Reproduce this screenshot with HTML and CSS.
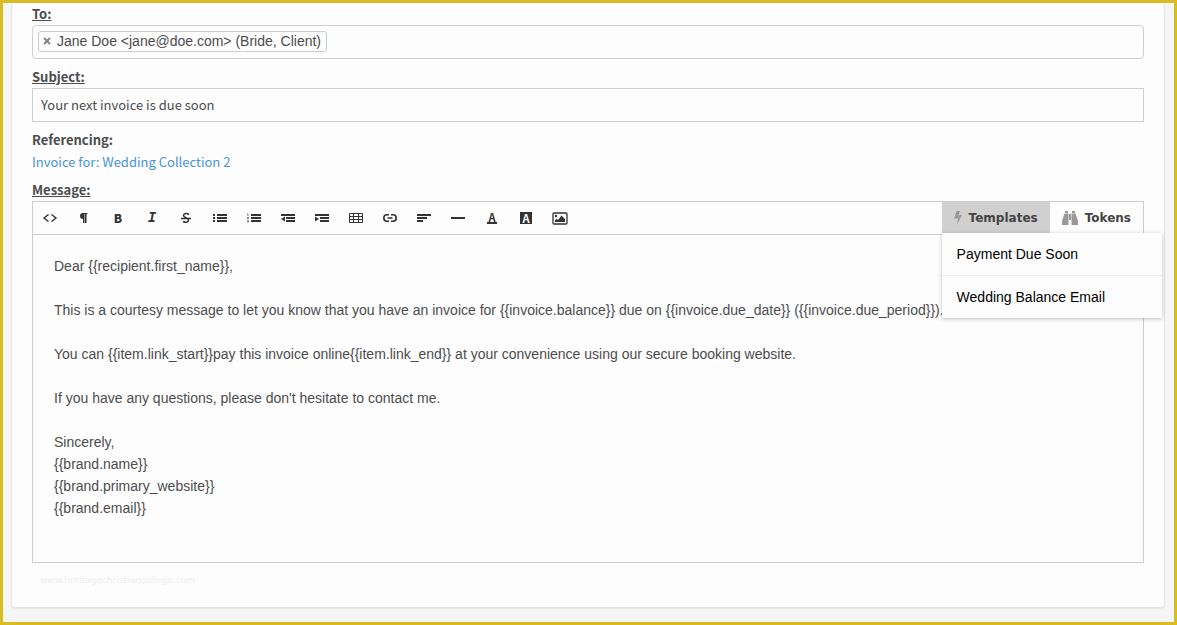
FILE: index.html
```html
<!DOCTYPE html>
<html lang="en">
<head>
  <meta charset="UTF-8">
  <meta name="viewport" content="width=device-width, initial-scale=1.0">
  <title>Compose message</title>
  <link rel="stylesheet" href="styles.css">
</head>
<body>
  <form class="card">
    <div class="field">
      <label class="label" for="to">To:</label>
      <div class="recipients">
        <span class="chip">
          <button type="button" class="chip-remove" aria-label="Remove Jane Doe">
            <svg width="8" height="8" viewBox="0 0 8 8"><path d="M1 1l6 6M7 1l-6 6" stroke="currentColor" stroke-width="2"/></svg>
          </button>
          Jane Doe &lt;jane@doe.com&gt; (Bride, Client)
        </span>
        <input type="text" id="to" class="recipients-input">
      </div>
    </div>

    <div class="field">
      <label class="label" for="subject">Subject:</label>
      <input type="text" id="subject" class="input" value="Your next invoice is due soon">
    </div>

    <div class="field field-reference">
      <strong class="label label-plain">Referencing:</strong>
      <a href="#" class="reference">Invoice for: Wedding Collection 2</a>
    </div>

    <label class="label" for="message">Message:</label>
    <div class="editor">
      <div class="toolbar">
        <button type="button" class="tool" aria-label="HTML">
          <svg width="16" height="16" viewBox="0 0 16 16"><path d="M6.500 4.500L2 8l4.500 3.500M9.500 4.500L14 8l-4.500 3.500" fill="none" stroke="currentColor" stroke-width="1.400"/></svg>
        </button>
        <button type="button" class="tool" aria-label="Formatting">
          <svg width="16" height="16" viewBox="0 0 16 16"><path d="M11.500 3v1h-1v9H9V4H8.500v9H7V9a3 3 0 0 1 0-6z" fill="currentColor"/></svg>
        </button>
        <button type="button" class="tool tool-text" aria-label="Bold"><b>B</b></button>
        <button type="button" class="tool tool-text tool-italic" aria-label="Italic"><i>I</i></button>
        <button type="button" class="tool" aria-label="Strikethrough">
          <svg width="16" height="16" viewBox="0 0 16 16"><path d="M11 4.500C8.500 3 5.500 3.500 5.500 5.500c0 2.500 5 2 5 4.500 0 2.500-3 2.800-5.500 1.500M3 8.500h10" fill="none" stroke="currentColor" stroke-width="1.500"/></svg>
        </button>
        <button type="button" class="tool" aria-label="Bulleted list">
          <svg width="16" height="16" viewBox="0 0 16 16" fill="currentColor"><path d="M1 4h2v2H1zM1 7h2v2H1zM1 10h2v2H1zM5 4h10v2H5zM5 7h10v2H5zM5 10h10v2H5z"/></svg>
        </button>
        <button type="button" class="tool" aria-label="Numbered list">
          <svg width="16" height="16" viewBox="0 0 16 16" fill="currentColor"><path d="M5 4h10v2H5zM5 7h10v2H5zM5 10h10v2H5z"/><path d="M1 4h1v2M1 7.500h1.500v1H1M1 10.500h1.500v1.500H1" fill="none" stroke="currentColor" stroke-width=".6"/></svg>
        </button>
        <button type="button" class="tool" aria-label="Outdent">
          <svg width="16" height="16" viewBox="0 0 16 16" fill="currentColor"><path d="M1 4h14v2H1zM6 7h9v2H6zM6 10h9v2H6zM1 9l4-2.500v5z"/></svg>
        </button>
        <button type="button" class="tool" aria-label="Indent">
          <svg width="16" height="16" viewBox="0 0 16 16" fill="currentColor"><path d="M1 4h14v2H1zM6 7h9v2H6zM6 10h9v2H6zM5 9L1 6.500v5z"/></svg>
        </button>
        <button type="button" class="tool" aria-label="Table">
          <svg width="16" height="16" viewBox="0 0 16 16"><path d="M1.500 3.500h13v9h-13zM1.500 6.500h13M1.500 9.500h13M5.500 3.500v9M10.500 3.500v9" fill="none" stroke="currentColor"/></svg>
        </button>
        <button type="button" class="tool" aria-label="Link">
          <svg width="16" height="16" viewBox="0 0 16 16"><path d="M7 4.800H5a3.200 3.200 0 0 0 0 6.400h2M9 4.800h2a3.200 3.200 0 0 1 0 6.400H9M5.500 8h5" fill="none" stroke="currentColor" stroke-width="1.600"/></svg>
        </button>
        <button type="button" class="tool" aria-label="Alignment">
          <svg width="16" height="16" viewBox="0 0 16 16" fill="currentColor"><path d="M1 4h14v2H1zM1 7h10v2H1zM1 10h6v2H1z"/></svg>
        </button>
        <button type="button" class="tool" aria-label="Horizontal rule">
          <svg width="16" height="16" viewBox="0 0 16 16" fill="currentColor"><path d="M1 7h14v2H1z"/></svg>
        </button>
        <button type="button" class="tool tool-text tool-color" aria-label="Text color"><span>A</span></button>
        <button type="button" class="tool tool-text tool-back" aria-label="Background color"><span>A</span></button>
        <button type="button" class="tool" aria-label="Image">
          <svg width="16" height="16" viewBox="0 0 16 16"><rect x="1" y="3" width="14" height="11" rx="1" fill="none" stroke="currentColor" stroke-width="1.300"/><circle cx="4" cy="6" r="1.200" fill="currentColor"/><path d="M3 12v-2l2-1 1 1 3.500-4.500L13 9v3z" fill="currentColor"/></svg>
        </button>

        <div class="inserts">
          <button type="button" class="insert insert-active" aria-expanded="true">
            <svg width="8" height="14" viewBox="0 0 8 14"><path d="M2.500 0H6L4.500 4.500 8 3.800 3 14l1-7L0 8z" fill="currentColor"/></svg>
            Templates
          </button>
          <button type="button" class="insert">
            <svg width="16" height="14" viewBox="0 0 16 14" fill="currentColor"><path d="M3 0h3v2H3zM10 0h3v2h-3zM2.500 2.500H6.500V14H0V10zM13.500 2.500H9.500V14H16V10zM7 3h2v6H7z"/></svg>
            Tokens
          </button>
          <div class="menu">
            <a href="#" class="menu-item">Payment Due Soon</a>
            <a href="#" class="menu-item">Wedding Balance Email</a>
          </div>
        </div>
      </div>
      <textarea id="message" class="message" rows="13">Dear {{recipient.first_name}},

This is a courtesy message to let you know that you have an invoice for {{invoice.balance}} due on {{invoice.due_date}} ({{invoice.due_period}}).

You can {{item.link_start}}pay this invoice online{{item.link_end}} at your convenience using our secure booking website.

If you have any questions, please don't hesitate to contact me.

Sincerely,
{{brand.name}}
{{brand.primary_website}}
{{brand.email}}
</textarea>
    </div>
    <p class="site">www.heritagechristiancollege.com</p>
  </form>
</body>
</html>
```
FILE: styles.css
```css
* {
  box-sizing: border-box;
}
body {
  margin: 0;
  min-height: 100vh;
  padding: 0 9px 14px 8px;
  border: 3px solid #dbbb24;
  background-color: #f6f6f6;
  color: #4c4c4e;
  font-family: "Noto Sans CJK SC", "Noto Sans", sans-serif;
  font-size: 13px;
  line-height: 22px;
}
button, input, textarea {
  margin: 0;
  color: inherit;
  font: inherit;
}
button {
  padding: 0;
  border: 0;
  background: none;
  cursor: pointer;
}
.card {
  padding: 0 20px 16px;
  border: 1px solid #e4e4e4;
  border-top: 0;
  border-radius: 0 0 4px 4px;
  background-color: #fdfdfd;
  box-shadow: 0 1px 1px #e8e8e8;
}
.field {
  margin-bottom: 7px;
}
.field-reference {
  margin-bottom: 6px;
}
.label {
  display: block;
  font-weight: bold;
  text-decoration: underline;
}
.label-plain {
  text-decoration: none;
}

/* recipients */
.recipients {
  display: flex;
  align-items: center;
  height: 34px;
  padding: 0 5px 2px;
  border: 1px solid #cfcfcf;
  border-radius: 4px;
}
.chip {
  display: flex;
  align-items: center;
  gap: 6px;
  height: 21px;
  padding: 0 5px 0 4px;
  border: 1px solid #cccccc;
  border-radius: 3px;
  font-family: "Liberation Sans", Arial, sans-serif;
  font-size: 14px;
  white-space: nowrap;
}
.chip-remove {
  display: flex;
  color: #858585;
}
.recipients-input {
  flex: 1;
  min-width: 0;
  border: 0;
  outline: 0;
  background: none;
}
.input {
  display: block;
  width: 100%;
  height: 34px;
  padding: 0 8px 2px;
  border: 1px solid #cfcfcf;
  background: none;
}
.reference {
  color: #4695d1;
  text-decoration: none;
}

/* editor */
.editor {
  border: 1px solid #cccccc;
}
.toolbar {
  display: flex;
  height: 33px;
  border-bottom: 1px solid #cccccc;
}
.tool {
  display: flex;
  align-items: center;
  justify-content: center;
  width: 34px;
  color: #333333;
}
.tool-text {
  font-size: 12px;
  font-weight: bold;
}
.tool-italic {
  font-family: "Liberation Mono", monospace;
  font-size: 14px;
}
.tool-color span {
  border-bottom: 2px solid;
  font-size: 11px;
  line-height: 10px;
  padding: 0 1px;
}
.tool-back span {
  width: 12px;
  background-color: #333333;
  color: #fdfdfd;
  font-size: 11px;
  line-height: 12px;
}
.inserts {
  position: relative;
  display: flex;
  margin-left: auto;
}
.insert {
  display: flex;
  align-items: center;
  gap: 7px;
  padding: 0 12px;
  color: #444444;
  font-family: "DejaVu Sans", Verdana, sans-serif;
  font-size: 12px;
  font-weight: bold;
}
.insert svg {
  color: #999999;
}
.insert-active {
  background-color: #d0d0d0;
}
.menu {
  position: absolute;
  top: 31px;
  left: 0;
  width: 220px;
  background-color: #fdfdfd;
  box-shadow: 0 1px 4px rgba(0, 0, 0, 0.25);
}
.menu-item {
  display: block;
  padding: 10px 15px;
  color: #000000;
  font-family: "Liberation Sans", Arial, sans-serif;
  font-size: 14px;
  text-decoration: none;
}
.menu-item + .menu-item {
  border-top: 1px solid #eeeeee;
}
.message {
  display: block;
  width: 100%;
  padding: 20px 21px 21px;
  border: 0;
  outline: 0;
  background: none;
  font-family: "Liberation Sans", Arial, sans-serif;
  font-size: 14px;
  resize: none;
  overflow: hidden;
}
.site {
  margin: 6px 8px 0;
  color: #eeeeee;
  font-family: "DejaVu Sans", Verdana, sans-serif;
  font-size: 9px;
}
```
